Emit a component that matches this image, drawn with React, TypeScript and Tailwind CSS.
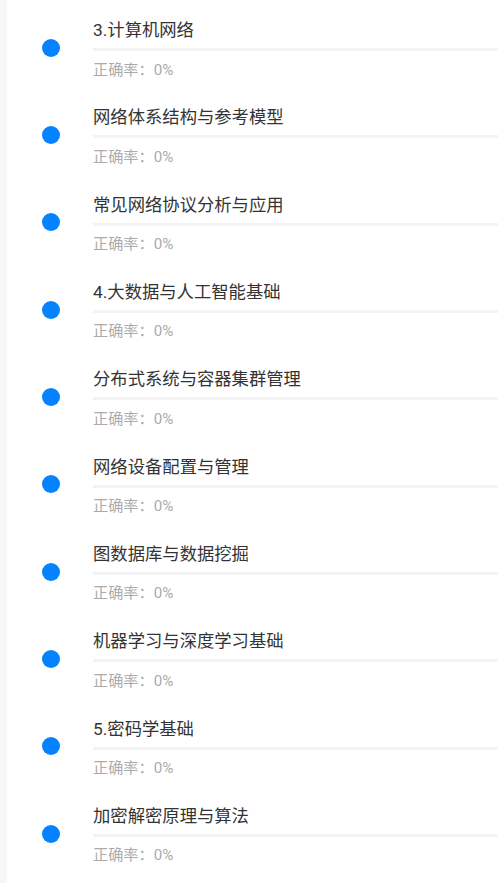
const chapters = [
  "3.计算机网络",
  "网络体系结构与参考模型",
  "常见网络协议分析与应用",
  "4.大数据与人工智能基础",
  "分布式系统与容器集群管理",
  "网络设备配置与管理",
  "图数据库与数据挖掘",
  "机器学习与深度学习基础",
  "5.密码学基础",
  "加密解密原理与算法",
];

export default function App() {
  return (
    <div
      className="flex min-h-[883px] w-[498px] overflow-hidden bg-white"
      style={{ fontFamily: "Roboto, 'Noto Sans CJK SC', sans-serif" }}
    >
      <div className="w-[7px] shrink-0 bg-[#f7f7f7]" />
      <ul className="flex-1">
        {chapters.map((title) => (
          <ChapterRow key={title} title={title} rate="0%" />
        ))}
      </ul>
    </div>
  );
}

function ChapterRow({ title, rate }: { title: string; rate: string }) {
  return (
    <li className="flex h-[87.33px]">
      <div className="w-[86px] shrink-0 pl-[34.5px] pt-[38.7px]">
        <span className="block h-[18px] w-[18px] rounded-full bg-[#0582ff]" />
      </div>
      <div className="flex-1 pt-[18px]">
        <p className="text-[17.33px] leading-[24px] text-[#333333]">{title}</p>
        <div className="mt-[6px] h-[3px] bg-[#f3f3f3]" />
        <p className="mt-[8.5px] text-[15.17px] leading-[20px] text-[#ababab]">正确率：{rate}</p>
      </div>
    </li>
  );
}
